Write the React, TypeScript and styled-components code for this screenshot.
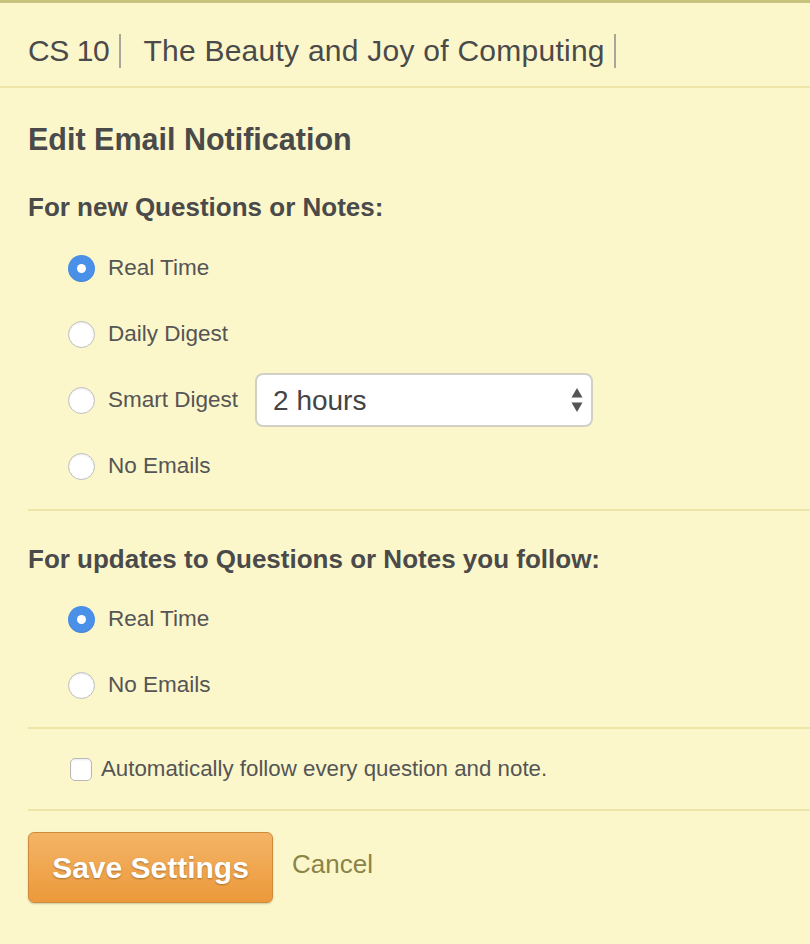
import React, { useState } from 'react';
import styled, { createGlobalStyle } from 'styled-components';

const GlobalStyle = createGlobalStyle`
  html, body {
    margin: 0;
    padding: 0;
    background: #fcf7cb;
  }
  body {
    font-family: 'Liberation Sans', Arial, sans-serif;
    color: #4a4a4a;
  }
`;

type Option = { value: string; label: string };

const NEW_OPTIONS: Option[] = [
  { value: 'real', label: 'Real Time' },
  { value: 'daily', label: 'Daily Digest' },
  { value: 'smart', label: 'Smart Digest' },
  { value: 'none', label: 'No Emails' },
];

const FOLLOW_OPTIONS: Option[] = [
  { value: 'real', label: 'Real Time' },
  { value: 'none', label: 'No Emails' },
];

function App() {
  const [newPref, setNewPref] = useState('real');
  const [followPref, setFollowPref] = useState('real');
  const [digest, setDigest] = useState('2');
  const [autoFollow, setAutoFollow] = useState(false);

  return (
    <Page>
      <GlobalStyle />
      <Header>
        <CourseNum>CS 10</CourseNum>
        <CourseName>The Beauty and Joy of Computing</CourseName>
      </Header>
      <Content>
        <Title>Edit Email Notification</Title>

        <SectionHeading>For new Questions or Notes:</SectionHeading>
        <RadioList>
          {NEW_OPTIONS.map((opt) => (
            <RadioRow key={opt.value}>
              <Radio
                checked={newPref === opt.value}
                onClick={() => setNewPref(opt.value)}
              />
              <RadioLabel onClick={() => setNewPref(opt.value)}>
                {opt.label}
              </RadioLabel>
              {opt.value === 'smart' && (
                <SelectBox>
                  <SelectInput
                    value={digest}
                    onChange={(e) => setDigest(e.target.value)}
                  >
                    <option value="1">1 hour</option>
                    <option value="2">2 hours</option>
                    <option value="4">4 hours</option>
                    <option value="8">8 hours</option>
                  </SelectInput>
                  <Arrows viewBox="0 0 12 26" aria-hidden>
                    <path d="M6 1 L11.5 10.5 H0.5 Z" fill="#555" />
                    <path d="M6 25 L11.5 15.5 H0.5 Z" fill="#555" />
                  </Arrows>
                </SelectBox>
              )}
            </RadioRow>
          ))}
        </RadioList>
        <Divider $top={10} />

        <SectionHeading $top={33}>
          For updates to Questions or Notes you follow:
        </SectionHeading>
        <RadioList $top={12}>
          {FOLLOW_OPTIONS.map((opt) => (
            <RadioRow key={opt.value}>
              <Radio
                checked={followPref === opt.value}
                onClick={() => setFollowPref(opt.value)}
              />
              <RadioLabel onClick={() => setFollowPref(opt.value)}>
                {opt.label}
              </RadioLabel>
            </RadioRow>
          ))}
        </RadioList>
        <Divider $top={9} />

        <CheckRow onClick={() => setAutoFollow(!autoFollow)}>
          <CheckBox checked={autoFollow} />
          <CheckLabel>Automatically follow every question and note.</CheckLabel>
        </CheckRow>
        <Divider />

        <Actions>
          <SaveButton>Save Settings</SaveButton>
          <CancelLink>Cancel</CancelLink>
        </Actions>
      </Content>
    </Page>
  );
}

export default App;

const Page = styled.div`
  min-height: 944px;
  border-top: 3px solid #c9c27c;
  box-sizing: border-box;
`;
const Header = styled.div`
  height: 85px;
  box-sizing: border-box;
  padding: 13px 0 0 28px;
  display: flex;
  align-items: center;
  border-bottom: 2px solid #ede6a8;
  font-size: 30px;
`;
const CourseNum = styled.span`
  padding-right: 10px;
  border-right: 2px solid #a9a69a;
  line-height: 34px;
  letter-spacing: -0.4px;
`;
const CourseName = styled.span`
  margin-left: 22px;
  padding-right: 9px;
  border-right: 2px solid #a9a69a;
  line-height: 34px;
  letter-spacing: 0.25px;
`;
const Content = styled.div`
  padding-left: 28px;
  padding-bottom: 40px;
`;
const Title = styled.h2`
  margin: 34px 0 0;
  font-size: 30.5px;
  line-height: 34px;
  font-weight: bold;
`;
const SectionHeading = styled.h3<{ $top?: number }>`
  margin: ${(p) => p.$top ?? 36}px 0 0;
  font-size: 26px;
  line-height: 30px;
  font-weight: bold;
`;
const RadioList = styled.div<{ $top?: number }>`
  margin-top: ${(p) => p.$top ?? 13}px;
  padding-left: 40px;
`;
const RadioRow = styled.div`
  height: 66px;
  display: flex;
  align-items: center;
`;
const Radio = styled.span<{ checked: boolean }>`
  width: 27px;
  height: 27px;
  border-radius: 50%;
  box-sizing: border-box;
  flex-shrink: 0;
  cursor: pointer;
  background: ${(p) => (p.checked ? '#4a90e9' : '#fff')};
  border: ${(p) => (p.checked ? 'none' : '1px solid #bdbdbd')};
  box-shadow: ${(p) =>
    p.checked ? 'inset 0 -1px 1px rgba(0,0,0,0.1)' : 'inset 0 1px 2px rgba(0,0,0,0.08)'};
  display: flex;
  align-items: center;
  justify-content: center;
  &::after {
    content: '';
    display: ${(p) => (p.checked ? 'block' : 'none')};
    width: 9px;
    height: 9px;
    border-radius: 50%;
    background: #fff;
  }
`;
const RadioLabel = styled.span`
  margin-left: 13px;
  font-size: 22.5px;
  color: #555;
  cursor: pointer;
`;
const SelectBox = styled.div`
  position: relative;
  margin-left: 17px;
  width: 338px;
  height: 54px;
`;
const SelectInput = styled.select`
  appearance: none;
  -webkit-appearance: none;
  width: 100%;
  height: 100%;
  box-sizing: border-box;
  padding: 0 40px 0 16px;
  border: 2px solid #d2d0c6;
  border-radius: 8px;
  background: #fff;
  font-family: 'Liberation Sans', Arial, sans-serif;
  font-size: 28px;
  color: #444;
  outline: none;
`;
const Arrows = styled.svg`
  position: absolute;
  right: 10px;
  top: 14px;
  width: 12px;
  height: 26px;
  pointer-events: none;
`;
const Divider = styled.hr<{ $top?: number }>`
  margin: ${(p) => p.$top ?? 0}px 0 0;
  border: none;
  height: 2px;
  background: #ede6a8;
`;
const CheckRow = styled.div`
  height: 80px;
  display: flex;
  align-items: center;
  padding-left: 42px;
  cursor: pointer;
`;
const CheckBox = styled.span<{ checked: boolean }>`
  width: 22px;
  height: 23px;
  box-sizing: border-box;
  border: 1px solid #b8b8b8;
  border-radius: 5px;
  background: ${(p) => (p.checked ? '#4a90e9' : '#fff')};
  box-shadow: inset 0 1px 2px rgba(0, 0, 0, 0.08);
`;
const CheckLabel = styled.span`
  margin-left: 9px;
  font-size: 22.3px;
  color: #555;
`;
const Actions = styled.div`
  margin-top: 21px;
  display: flex;
  align-items: center;
`;
const SaveButton = styled.button`
  width: 245px;
  height: 71px;
  border: 1px solid #d08a3c;
  border-radius: 6px;
  background: linear-gradient(#f4b466, #ec993a);
  box-shadow: 0 1px 2px rgba(0, 0, 0, 0.2);
  color: #fff;
  font-family: 'Liberation Sans', Arial, sans-serif;
  font-weight: bold;
  font-size: 30px;
  text-shadow: 0 1px 2px rgba(0, 0, 0, 0.3);
  cursor: pointer;
`;
const CancelLink = styled.a`
  margin-left: 19px;
  margin-top: -6px;
  font-size: 26px;
  color: #8c8346;
  cursor: pointer;
`;
